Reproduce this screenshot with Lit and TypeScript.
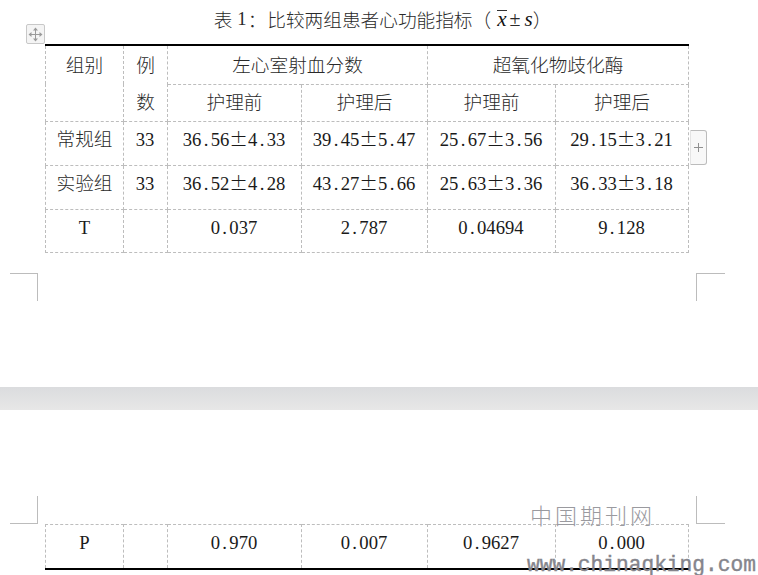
import { LitElement, html, css } from "lit";
import { customElement } from "lit/decorators.js";

const num = (s: string) =>
  s.split("").map((c) =>
    c === "." ? html`<span class="dot">.</span>` : c === "±" ? html`<span class="pm">±</span>` : c
  );

const cols = html`<colgroup>
  <col class="c1" /><col class="c2" /><col class="c3" /><col class="c4" /><col class="c5" /><col class="c6" />
</colgroup>`;

const row = (cells: string[], cls = "") => html`<tr class=${cls}>
  ${cells.map((c, i) => html`<td class=${i === 0 ? "side" : "n"}>${num(c)}</td>`)}
</tr>`;

@customElement("app-root")
export class AppRoot extends LitElement {
  static styles = css`
    :host {
      display: block;
      position: relative;
      width: 758px;
      height: 575px;
      overflow: hidden;
      background: #fff;
      color: #1a1a1a;
      font-family: "Liberation Serif", "Noto Sans CJK SC", serif;
      font-size: 18.67px;
    }
    .page1 { position: relative; height: 387px; }
    .gap { height: 23px; background: linear-gradient(#dbdcde, #e7e7e7); }
    .page2 { position: relative; height: 165px; padding-top: 114px; box-sizing: border-box; }
    .title {
      display: flex;
      justify-content: center;
      height: 44px;
      line-height: 38px;
      padding-left: 7px;
      font-family: "Noto Sans CJK SC", sans-serif;
      font-weight: 300;
      color: #2a2a2a;
      white-space: nowrap;
      box-sizing: border-box;
    }
    .title .one { font-family: "Liberation Serif", serif; margin: 0 1px 0 5px; }
    .title .chars { margin-left: 1px; }
    .title .pmt { font-family: "Liberation Serif", serif; margin: 0 4px 0 3px; font-size: 20px; }
    .title i { font-family: "Liberation Serif", serif; font-style: italic; font-size: 21px; color: #111; }
    .title .bar { position: relative; margin-left: 6px; }
    .title .bar::before {
      content: "";
      position: absolute;
      left: 0;
      right: 0;
      top: 10px;
      height: 1px;
      background: #333;
    }
    table {
      border-collapse: collapse;
      table-layout: fixed;
      width: 643px;
      margin-left: 45px;
    }
    col.c1 { width: 78px; }
    col.c2 { width: 44px; }
    col.c3 { width: 134px; }
    col.c4 { width: 126px; }
    col.c5 { width: 128px; }
    col.c6 { width: 133px; }
    td {
      border: 1px dashed #bdbdbd;
      padding: 0;
      text-align: center;
      vertical-align: top;
      line-height: 36px;
    }
    .n { padding-right: 1px; }
    .h, .side { font-family: "Noto Sans CJK SC", sans-serif; font-weight: 300; color: #2a2a2a; }
    .h { line-height: 36px; }
    .side { line-height: 32px; }
    .r2 .h { line-height: 31px; }
    .lat { font-family: "Liberation Serif", serif; }
    .dot { display: inline-block; width: 0.5em; text-align: center; line-height: 1; }
    .pm {
      display: inline-block;
      width: 1em;
      text-align: center;
      font-family: "Noto Sans CJK SC", sans-serif;
      font-weight: 300;
      line-height: 1;
    }
    .h.stack { line-height: 36.5px; }
    tr.r1 { height: 39px; }
    tr.r2 { height: 37px; }
    tr.r3 { height: 44px; }
    tr.r4 { height: 44px; }
    tr.r5 { height: 43px; }
    tr.r6 { height: 44px; }
    .top tr:first-child td { border-top: 2px solid #000; }
    .bottom td { border-bottom: 2px solid #000; }
    .mark { position: absolute; width: 28px; height: 28px; box-sizing: border-box; border: 0 solid #bcbcbc; }
    .tl { left: 10px; top: 273px; border-top-width: 1px; border-right-width: 1px; }
    .tr { left: 696px; top: 273px; border-top-width: 1px; border-left-width: 1px; width: 29px; }
    .bl { left: 10px; top: 86px; border-bottom-width: 1px; border-right-width: 1px; }
    .br { left: 696px; top: 86px; border-bottom-width: 1px; border-left-width: 1px; width: 29px; }
    .move {
      position: absolute;
      left: 26px;
      top: 24px;
      width: 19px;
      height: 20px;
      box-sizing: border-box;
      border: 1px solid #c8c8c8;
      border-radius: 2px;
      background: #f4f4f4;
      display: flex;
      align-items: center;
      justify-content: center;
    }
    .plus {
      position: absolute;
      left: 690px;
      top: 130px;
      width: 17px;
      height: 35px;
      box-sizing: border-box;
      border: 1px solid #bcbcbc;
      border-left-color: #e4e4e4;
      border-radius: 0 3px 3px 0;
      background: #f8f8f8;
      display: flex;
      align-items: center;
      justify-content: center;
    }
    .wm1 {
      position: absolute;
      left: 530px;
      top: 498px;
      font-family: "Noto Sans CJK SC", sans-serif;
      font-weight: 300;
      font-size: 22px;
      letter-spacing: 3px;
      line-height: 32px;
      color: #9a9a9f;
      white-space: nowrap;
    }
    .wm2 {
      position: absolute;
      left: 527px;
      top: 555px;
      font-family: "Liberation Mono", monospace;
      font-size: 21.2px;
      line-height: 20px;
      color: #85858c;
      -webkit-text-stroke: 0.4px #85858c;
      white-space: nowrap;
    }
  `;

  render() {
    return html`
      <div class="page1">
        <div class="title">
          <span>表</span><span class="one">1</span><span>：</span><span class="chars">比较两组患者心功能指标（</span><i class="bar">x</i><span class="pmt">±</span><i>s</i><span>）</span>
        </div>
        <table class="top">
          ${cols}
          <tr class="r1">
            <td class="h" rowspan="2">组别</td>
            <td class="h stack" rowspan="2">例<br />数</td>
            <td class="h" colspan="2">左心室射血分数</td>
            <td class="h" colspan="2">超氧化物歧化酶</td>
          </tr>
          <tr class="r2">
            <td class="h">护理前</td><td class="h">护理后</td><td class="h">护理前</td><td class="h">护理后</td>
          </tr>
          ${row(["常规组", "33", "36.56±4.33", "39.45±5.47", "25.67±3.56", "29.15±3.21"], "r3")}
          ${row(["实验组", "33", "36.52±4.28", "43.27±5.66", "25.63±3.36", "36.33±3.18"], "r4")}
          <tr class="r5">
            <td class="lat">T</td><td></td><td class="n">${num("0.037")}</td><td class="n">${num("2.787")}</td><td class="n">${num("0.04694")}</td><td class="n">${num("9.128")}</td>
          </tr>
        </table>
        <div class="mark tl"></div>
        <div class="mark tr"></div>
        <div class="move">
          <svg width="15" height="15" viewBox="0 0 15 15" fill="#9a9a9a">
            <rect x="7" y="3" width="1" height="9" />
            <rect x="3" y="7" width="9" height="1" />
            <path d="M7.5 0.5 10 3.5H5zM7.5 14.5 5 11.5H10zM0.5 7.5 3.5 5V10zM14.5 7.5 11.5 10V5z" />
          </svg>
        </div>
        <div class="plus">
          <svg width="9" height="9" viewBox="0 0 9 9" fill="#909090">
            <rect x="4" y="0" width="1" height="9" /><rect x="0" y="4" width="9" height="1" />
          </svg>
        </div>
      </div>
      <div class="gap"></div>
      <div class="page2">
        <div class="mark bl"></div>
        <div class="mark br"></div>
        <table class="bottom">
          ${cols}
          <tr class="r6">
            <td class="lat">P</td><td></td><td class="n">${num("0.970")}</td><td class="n">${num("0.007")}</td><td class="n">${num("0.9627")}</td><td class="n">${num("0.000")}</td>
          </tr>
        </table>
      </div>
      <div class="wm1">中国期刊网</div>
      <div class="wm2">www.chinaqking.com</div>
    `;
  }
}
